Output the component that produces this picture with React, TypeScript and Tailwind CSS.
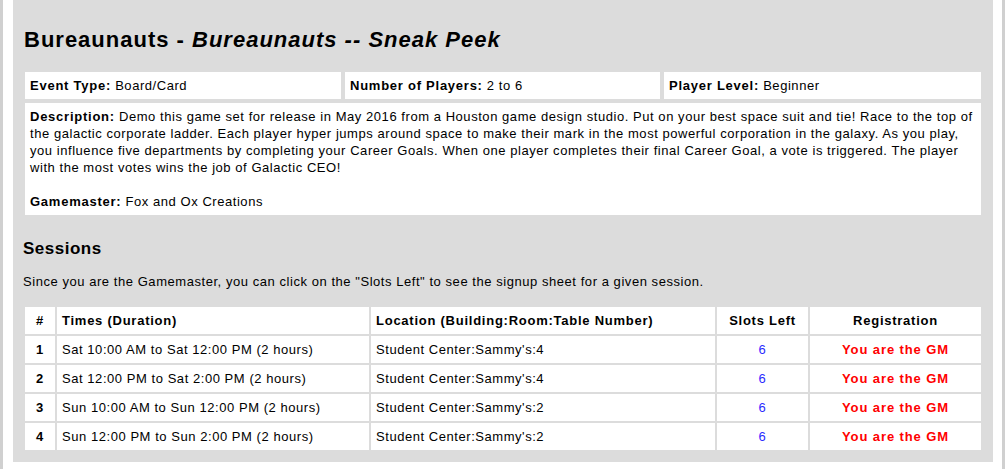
import React from "react";

const sessions = [
  { n: 1, time: "Sat 10:00 AM to Sat 12:00 PM (2 hours)", loc: "Student Center:Sammy's:4" },
  { n: 2, time: "Sat 12:00 PM to Sat 2:00 PM (2 hours)", loc: "Student Center:Sammy's:4" },
  { n: 3, time: "Sun 10:00 AM to Sun 12:00 PM (2 hours)", loc: "Student Center:Sammy's:2" },
  { n: 4, time: "Sun 12:00 PM to Sun 2:00 PM (2 hours)", loc: "Student Center:Sammy's:2" },
];

function B({ children }: { children: React.ReactNode }) {
  return <b className="font-bold tracking-[0.75px]">{children}</b>;
}

export default function App() {
  return (
    <div
      className="w-[1005px] h-[469px] bg-white border-x-[3px] border-[#d0d0d0] pl-[10px] pr-[9px] text-black overflow-hidden"
      style={{ fontFamily: '"Liberation Sans", Arial, sans-serif' }}
    >
      <div className="w-[980px] h-[462px] bg-[#dcdcdc] pt-[28px] px-[8px] text-[13px] leading-[17px] tracking-[0.55px]">
        <h1 className="text-[22px] leading-[24px] font-bold pl-[3px] tracking-[1px] whitespace-nowrap">
          Bureaunauts - <i>Bureaunauts -- Sneak Peek</i>
        </h1>
        <table className="mt-[16px] w-[964px] border-separate border-spacing-[4px] table-fixed">
          <colgroup>
            <col className="w-[316px]" />
            <col className="w-[315px]" />
            <col className="w-[317px]" />
          </colgroup>
          <tbody>
            <tr>
              <td className="bg-white p-[5px] whitespace-nowrap">
                <B>Event Type:</B> Board/Card
              </td>
              <td className="bg-white p-[5px] whitespace-nowrap">
                <B>Number of Players:</B> 2 to 6
              </td>
              <td className="bg-white p-[5px] whitespace-nowrap">
                <B>Player Level:</B> Beginner
              </td>
            </tr>
            <tr>
              <td colSpan={3} className="bg-white p-[5px]">
                <B>Description:</B> Demo this game set for release in May 2016 from a Houston game design studio. Put on your
                best space suit and tie! Race to the top of the galactic corporate ladder. Each player hyper jumps around space
                to make their mark in the most powerful corporation in the galaxy. As you play, you influence five departments by
                completing your Career Goals. When one player completes their final Career Goal, a vote is triggered. The player
                with the most votes wins the job of Galactic CEO!
                <br />
                <br />
                <B>Gamemaster:</B> Fox and Ox Creations
              </td>
            </tr>
          </tbody>
        </table>
        <h2 className="mt-[20px] pl-[2px] text-[17px] leading-[20px] font-bold tracking-[0.5px]">Sessions</h2>
        <p className="mt-[14px] pl-[2px] whitespace-nowrap">
          Since you are the Gamemaster, you can click on the "Slots Left" to see the signup sheet for a given session.
        </p>
        <table className="mt-[15px] ml-[2px] w-[960px] border-separate border-spacing-[2px] table-fixed">
          <colgroup>
            <col className="w-[30px]" />
            <col className="w-[312px]" />
            <col className="w-[344px]" />
            <col className="w-[91px]" />
            <col className="w-[171px]" />
          </colgroup>
          <thead>
            <tr className="h-[27px]">
              <th className="bg-white text-center font-bold tracking-[0.75px]">#</th>
              <th className="bg-white text-left font-bold px-[5px] tracking-[0.75px] whitespace-nowrap">Times (Duration)</th>
              <th className="bg-white text-left font-bold px-[5px] tracking-[0.75px] whitespace-nowrap">
                Location (Building:Room:Table Number)
              </th>
              <th className="bg-white text-center font-bold tracking-[0.75px] whitespace-nowrap">Slots Left</th>
              <th className="bg-white text-center font-bold tracking-[0.75px] whitespace-nowrap">Registration</th>
            </tr>
          </thead>
          <tbody>
            {sessions.map((s) => (
              <tr key={s.n} className="h-[27px]">
                <td className="bg-white text-center font-bold tracking-[0.75px]">{s.n}</td>
                <td className="bg-white px-[5px] whitespace-nowrap">{s.time}</td>
                <td className="bg-white px-[5px] whitespace-nowrap">{s.loc}</td>
                <td className="bg-white text-center text-[#2a2aff]">6</td>
                <td className="bg-white text-center font-bold text-[#ff0000] tracking-[0.9px] whitespace-nowrap">
                  You are the GM
                </td>
              </tr>
            ))}
          </tbody>
        </table>
      </div>
    </div>
  );
}
